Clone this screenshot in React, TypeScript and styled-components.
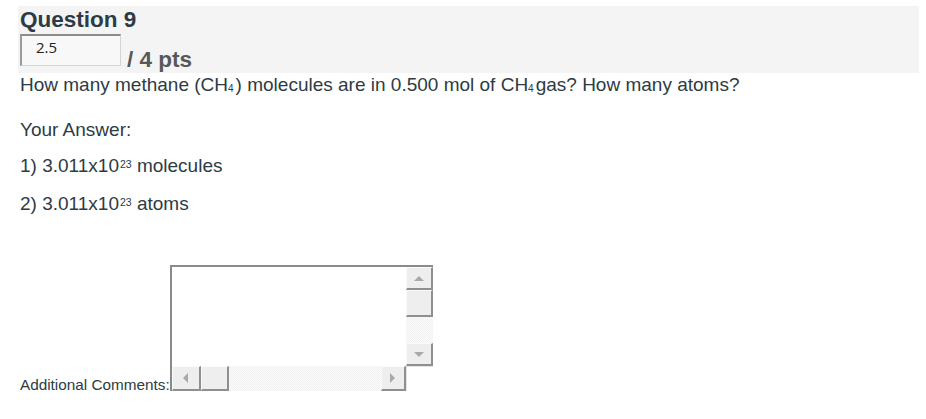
import React from 'react';
import styled, { createGlobalStyle } from 'styled-components';

const GlobalStyle = createGlobalStyle`
  body {
    margin: 0;
    background: #ffffff;
    font-family: "Liberation Sans", Arial, Helvetica, sans-serif;
    color: #2d3b45;
  }
`;

const Page = styled.div`
  padding: 6px 7px 0 18px;
`;

const Header = styled.div`
  background-color: #f4f4f4;
  height: 67px;
  padding: 2px 0 0 2px;
  box-sizing: border-box;
`;

const Title = styled.div`
  font-size: 22.5px;
  font-weight: bold;
  line-height: 24px;
  color: #2d3b45;
`;

const ScoreRow = styled.div`
  display: flex;
  align-items: flex-end;
  margin-top: 2px;
`;

const ScoreInput = styled.div`
  width: 101px;
  height: 32px;
  box-sizing: border-box;
  border-top: 2px solid #8c8c8c;
  border-left: 2px solid #9a9a9a;
  border-right: 1px solid #d4d4d4;
  border-bottom: 1px solid #d4d4d4;
  background: #f8f8f8;
  font-family: "Open Sans", "Liberation Sans", sans-serif;
  font-size: 15px;
  color: #222;
  padding: 1px 0 0 14px;
  line-height: 20px;
`;

const Points = styled.span`
  font-size: 22.5px;
  font-weight: bold;
  color: #585858;
  margin-left: 6px;
  line-height: 20px;
  position: relative;
  top: 4px;
`;

const Paragraph = styled.p<{ gap: number }>`
  margin: ${(p) => p.gap}px 0 0 2px;
  font-size: 19px;
  line-height: 22px;
`;

const Sub = styled.span`
  font-size: 10px;
  line-height: 0;
  position: relative;
  top: 1px;
  margin-right: 2px;
`;

const Sup = styled.span`
  font-size: 10.5px;
  line-height: 0;
  position: relative;
  top: -4px;
  margin-left: 1px;
`;

const CommentRow = styled.div`
  display: flex;
  align-items: flex-end;
  margin: 50px 0 0 2px;
`;

const Label = styled.span`
  font-size: 15.3px;
  line-height: 16px;
  position: relative;
  top: 2px;
`;

const FakeTextarea = styled.div`
  width: 263px;
  height: 126px;
  box-sizing: border-box;
  border-top: 2px solid #8a8a8a;
  border-left: 2px solid #8a8a8a;
  background: #ffffff;
  display: grid;
  grid-template-columns: 1fr 27px;
  grid-template-rows: 1fr 25px;
`;

const VScroll = styled.div`
  display: flex;
  flex-direction: column;
`;

const HScroll = styled.div`
  display: flex;
`;

const Track = styled.div`
  flex: 1;
  background-color: #f9f9f9;
  background-image: repeating-conic-gradient(#f0f0f0 0 25%, #fcfcfc 0 50%);
  background-size: 2px 2px;
`;

const ScrollButton = styled.div<{ w: number; h: number }>`
  width: ${(p) => p.w}px;
  height: ${(p) => p.h}px;
  flex: none;
  box-sizing: border-box;
  background: #eeeeee;
  border-top: 1px solid #fafafa;
  border-left: 1px solid #fafafa;
  border-right: 2px solid #8f8f8f;
  border-bottom: 2px solid #8f8f8f;
  display: flex;
  align-items: center;
  justify-content: center;
`;

const Corner = styled.div`
  background: #ffffff;
  border-left: 1px solid #e4e4e4;
  border-top: 1px solid #e4e4e4;
`;

const Arrow = ({ dir }: { dir: 'up' | 'down' | 'left' | 'right' }) => {
  const pts = {
    up: '0,5 5,0 10,5',
    down: '0,0 10,0 5,5',
    left: '5,0 5,10 0,5',
    right: '0,0 0,10 5,5',
  }[dir];
  const vertical = dir === 'up' || dir === 'down';
  return (
    <svg width={vertical ? 10 : 5} height={vertical ? 5 : 10} viewBox={vertical ? '0 0 10 5' : '0 0 5 10'}>
      <polygon points={pts} fill="#a9a9a9" />
    </svg>
  );
};

export default function App() {
  return (
    <>
      <GlobalStyle />
      <Page>
        <Header>
          <Title>Question 9</Title>
          <ScoreRow>
            <ScoreInput>2.5</ScoreInput>
            <Points>/ 4 pts</Points>
          </ScoreRow>
        </Header>
        <Paragraph gap={1}>
          How many methane (CH<Sub>4</Sub>) molecules are in 0.500 mol of CH<Sub>4</Sub>gas? How many atoms?
        </Paragraph>
        <Paragraph gap={23}>Your Answer:</Paragraph>
        <Paragraph gap={14}>
          1) 3.011x10<Sup>23</Sup> molecules
        </Paragraph>
        <Paragraph gap={16}>
          2) 3.011x10<Sup>23</Sup> atoms
        </Paragraph>
        <CommentRow>
          <Label>Additional Comments:</Label>
          <FakeTextarea>
            <div />
            <VScroll>
              <ScrollButton w={27} h={23}>
                <Arrow dir="up" />
              </ScrollButton>
              <ScrollButton w={27} h={27} />
              <Track />
              <ScrollButton w={27} h={23}>
                <Arrow dir="down" />
              </ScrollButton>
            </VScroll>
            <HScroll>
              <ScrollButton w={29} h={25}>
                <Arrow dir="left" />
              </ScrollButton>
              <ScrollButton w={28} h={25} />
              <Track />
              <ScrollButton w={25} h={25}>
                <Arrow dir="right" />
              </ScrollButton>
            </HScroll>
            <Corner />
          </FakeTextarea>
        </CommentRow>
      </Page>
    </>
  );
}
